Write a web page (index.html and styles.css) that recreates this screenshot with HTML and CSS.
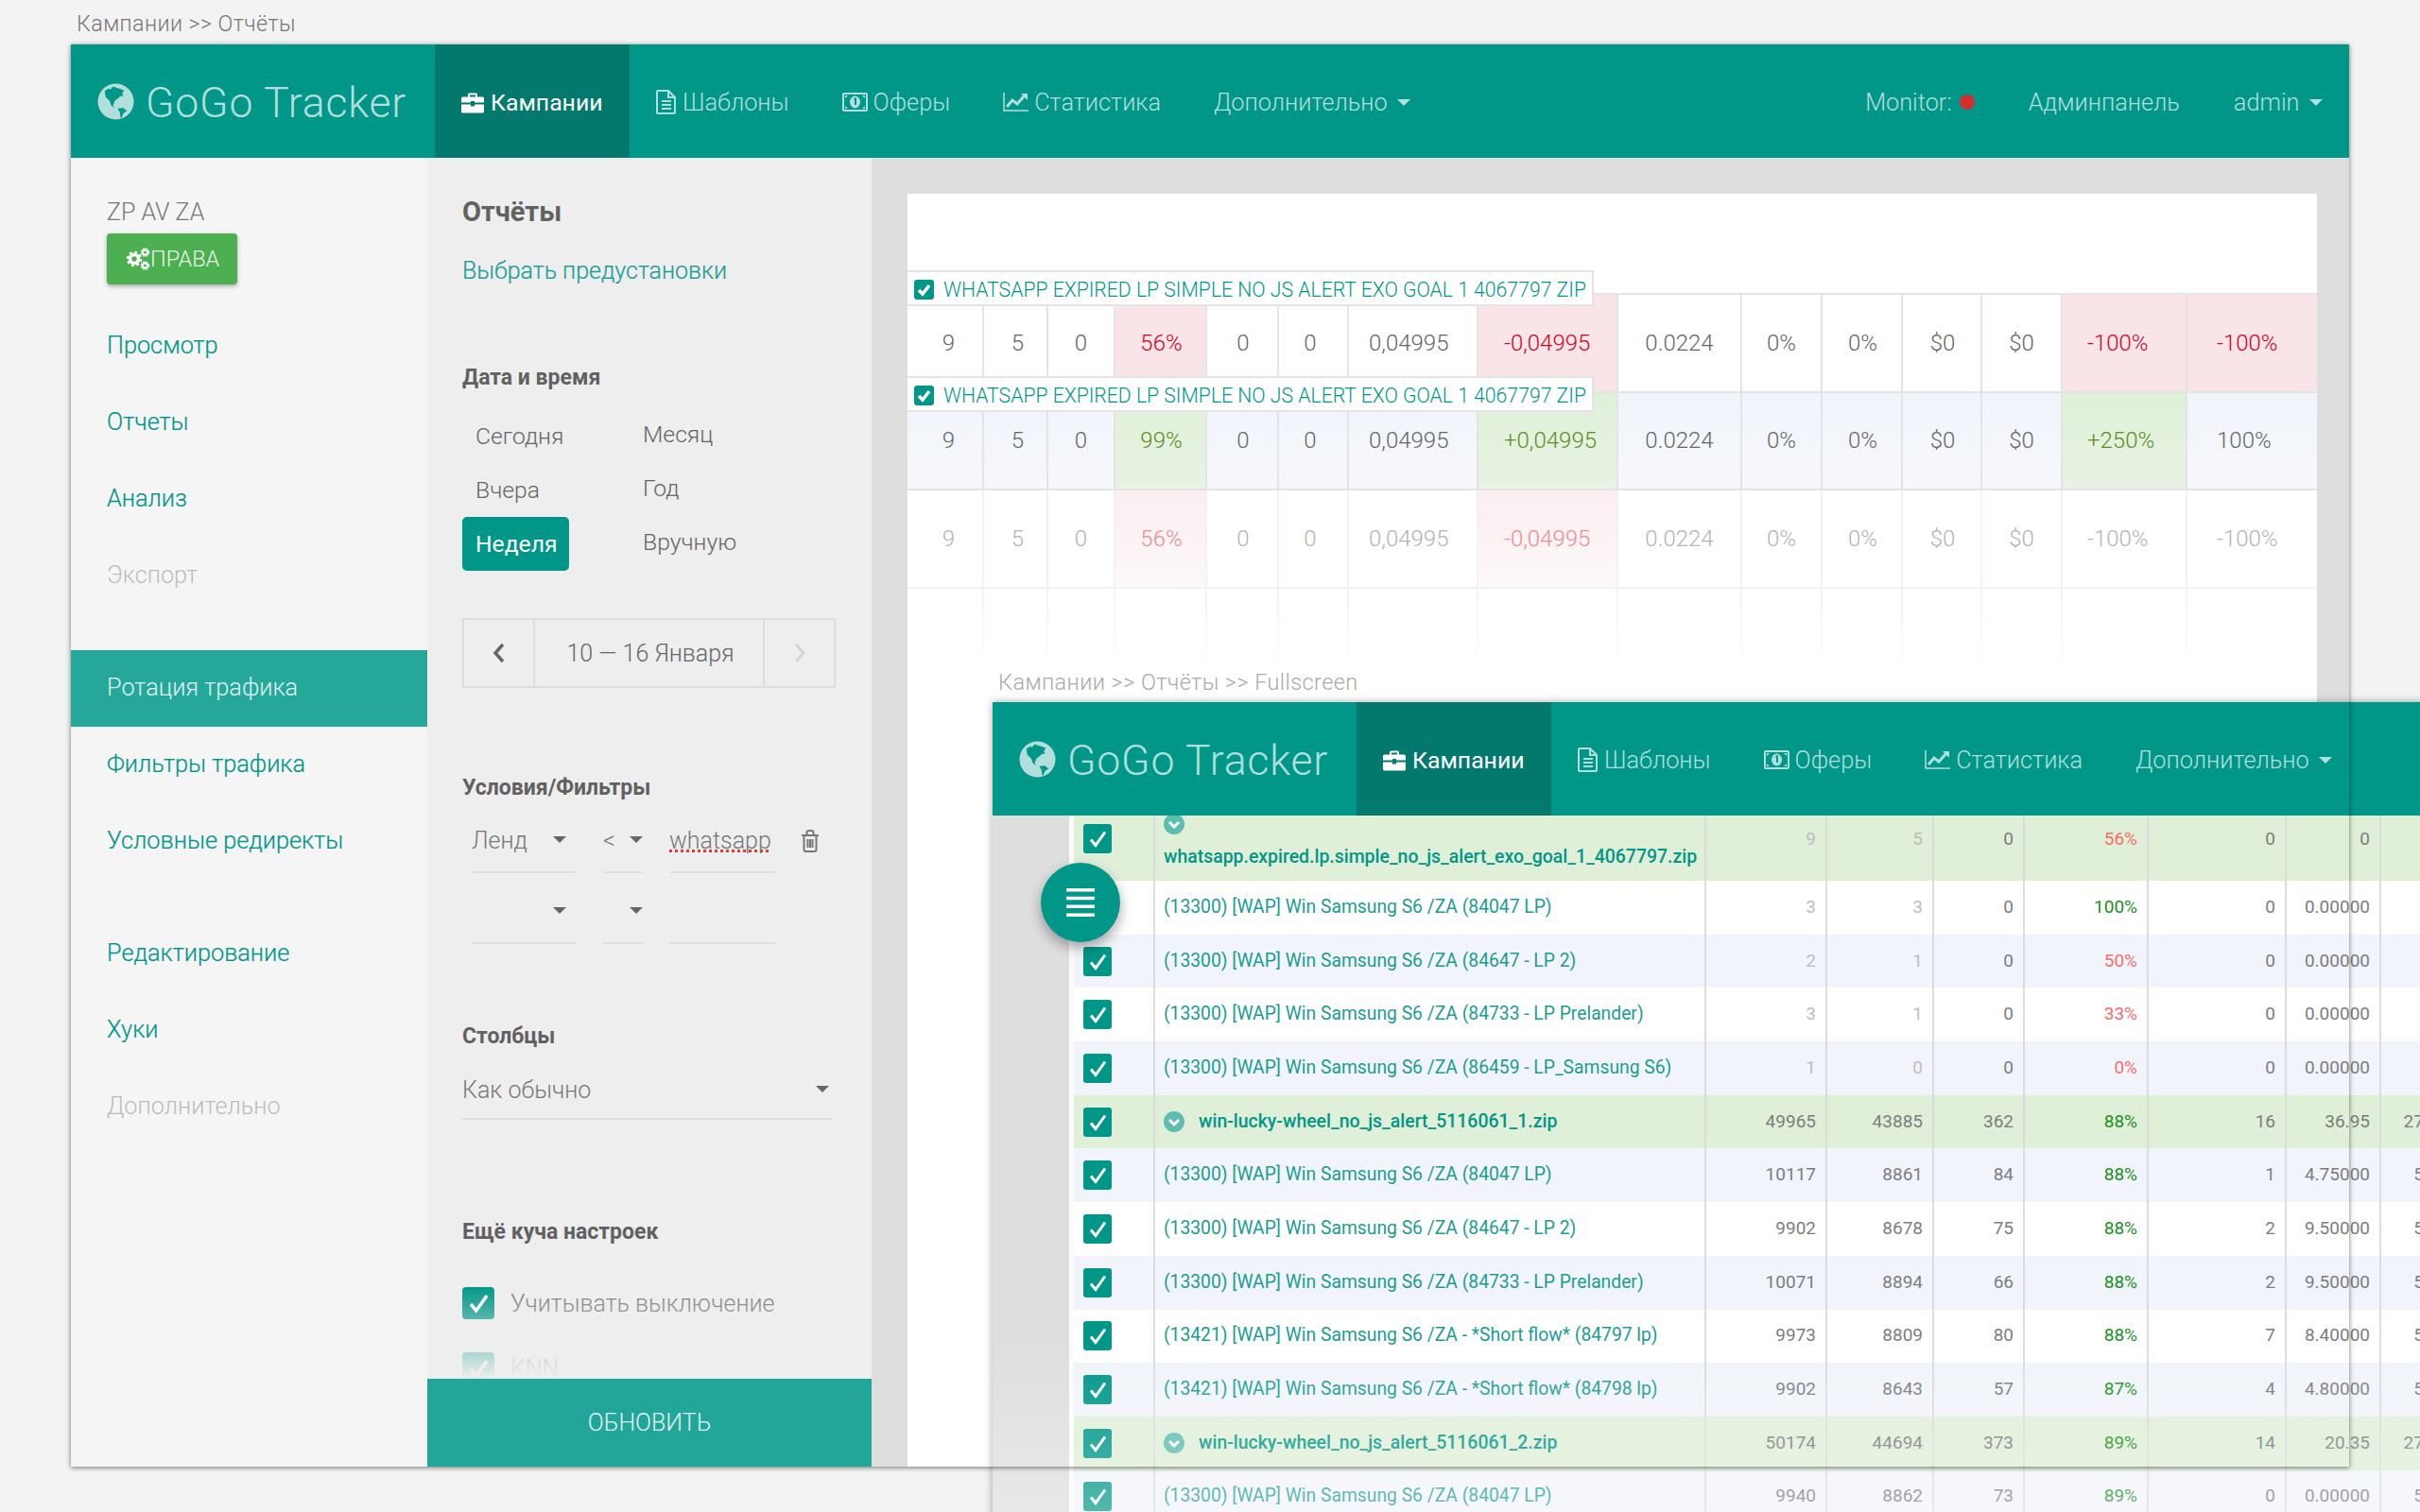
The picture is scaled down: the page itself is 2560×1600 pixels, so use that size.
FILE: index.html
```html
<!DOCTYPE html>
<html lang="ru">
<head>
    <meta charset="UTF-8">
    <title>GoGo Tracker - Отчёты</title>
    <link rel="stylesheet" href="styles.css">
</head>
<body>
    <svg class="defs" width="0" height="0">
        <symbol id="i-globe" viewBox="0 0 40 40">
            <circle cx="20" cy="20" r="19.5" fill="#b2dfdb"/>
            <path fill="#009688" d="M8 8.500L12 6l2 1 3-3.500L21 5l3 1 5 2-2 3 1 3-3 0-3 3-3 2-2 5 2 3-4-3-2-5-4-4z"/>
            <path fill="#009688" d="M22 27.500l6-.5 4 3-4 3-2 5-1-1-.500-5z"/>
        </symbol>
        <symbol id="i-case" viewBox="0 0 24 22">
            <path fill-rule="evenodd" d="M8.500 1h7A1.500 1.500 0 0 1 17 2.500V5h5.500A1.500 1.500 0 0 1 24 6.500V11H14V9.500h-4V11H0V6.500A1.500 1.500 0 0 1 1.500 5H7V2.500A1.500 1.500 0 0 1 8.500 1zM9 3v2h6V3zM0 13h10v2h4v-2h10v7.500a1.500 1.500 0 0 1-1.500 1.500h-21A1.500 1.500 0 0 1 0 20.500z"/>
        </symbol>
        <symbol id="i-file" viewBox="0 0 22 26">
            <path fill="none" stroke="currentColor" stroke-width="2" d="M2 1h11l7 7v16a1 1 0 0 1-1 1H2a1 1 0 0 1-1-1V2a1 1 0 0 1 1-1zM13 1v7h7M6 12h10M6 16h10M6 20h10"/>
        </symbol>
        <symbol id="i-money" viewBox="0 0 27 20">
            <rect x="1" y="1" width="25" height="18" rx="1" fill="none" stroke="currentColor" stroke-width="2"/>
            <ellipse cx="13.500" cy="10" rx="5.500" ry="6.500" fill="currentColor"/>
            <path fill="none" stroke="#009688" stroke-width="2" d="M12.500 7l1.500-.500V13"/>
            <path fill="currentColor" d="M3 3h3l-3 3zM24 3h-3l3 3zM3 17h3l-3-3zM24 17h-3l3-3z"/>
        </symbol>
        <symbol id="i-chart" viewBox="0 0 27 20">
            <path fill="none" stroke="currentColor" stroke-width="1.500" d="M1 0v19h26"/>
            <path fill="none" stroke="currentColor" stroke-width="3" d="M4 15l6-7 5 4 8-9"/>
            <path fill="currentColor" d="M19 1h7v7z"/>
        </symbol>
        <symbol id="i-cogs" viewBox="0 0 26 24">
            <g fill="none" stroke="#fff">
                <circle cx="9" cy="12" r="4.500" stroke-width="3.500"/>
                <circle cx="9" cy="12" r="7" stroke-width="2.500" stroke-dasharray="3 2.500"/>
                <circle cx="20.500" cy="5" r="2.500" stroke-width="2"/>
                <circle cx="20.500" cy="5" r="4" stroke-width="1.500" stroke-dasharray="2 1.200"/>
                <circle cx="20.500" cy="19" r="2.500" stroke-width="2"/>
                <circle cx="20.500" cy="19" r="4" stroke-width="1.500" stroke-dasharray="2 1.200"/>
            </g>
        </symbol>
        <symbol id="i-check" viewBox="0 0 30 30">
            <path fill="none" stroke="#fff" stroke-width="3" d="M8 16l5 6 10-14"/>
        </symbol>
        <symbol id="i-check-bold" viewBox="0 0 21 21">
            <path fill="none" stroke="#fff" stroke-width="3.500" d="M5 11l4 4 7-9"/>
        </symbol>
        <symbol id="i-down" viewBox="0 0 22 22">
            <circle cx="11" cy="11" r="11" fill="#5dbdb1"/>
            <path fill="none" stroke="#fff" stroke-width="3" d="M6 9l5 5 5-5"/>
        </symbol>
        <symbol id="i-trash" viewBox="0 0 20 24">
            <path fill="none" stroke="currentColor" stroke-width="2" d="M1 6h18M3.500 6v15a2 2 0 0 0 2 2h9a2 2 0 0 0 2-2V6M6.500 6V3a2 2 0 0 1 2-2h3a2 2 0 0 1 2 2v3M7.500 10v9M10 10v9M12.500 10v9"/>
        </symbol>
        <symbol id="i-menu" viewBox="0 0 30 30">
            <path fill="#fff" d="M0 0h30v3.500H0zM0 8.800h30v3.500H0zM0 17.600h30v3.500H0zM0 26.400h30v3.500H0z"/>
        </symbol>
    </svg>

    <!-- report window -->
    <section class="shot shot-report">
        <div class="crumbs">Кампании &gt;&gt; Отчёты</div>
        <div class="window">
            <header class="topbar">
                <div class="brand"><svg class="globe"><use href="#i-globe"/></svg><span class="brand-name">GoGo Tracker</span></div>
                <a class="nav-item active"><svg class="icon case"><use href="#i-case"/></svg>Кампании</a>
                <a class="nav-item"><svg class="icon file"><use href="#i-file"/></svg>Шаблоны</a>
                <a class="nav-item"><svg class="icon money"><use href="#i-money"/></svg>Оферы</a>
                <a class="nav-item"><svg class="icon money"><use href="#i-chart"/></svg>Статистика</a>
                <a class="nav-item">Дополнительно<span class="caret light"></span></a>
                <div class="topbar-right">
                    <a class="nav-item">Monitor:<span class="dot"></span></a>
                    <a class="nav-item">Админпанель</a>
                    <a class="nav-item">admin<span class="caret light"></span></a>
                </div>
            </header>
            <div class="window-body">
                <aside class="sidebar">
                    <div class="camp-name">ZP AV ZA</div>
                    <button class="rights-btn"><svg class="cogs"><use href="#i-cogs"/></svg>ПРАВА</button>
                    <ul class="side-menu">
                        <li>Просмотр</li>
                        <li>Отчеты</li>
                        <li>Анализ</li>
                        <li class="off">Экспорт</li>
                    </ul>
                    <ul class="side-menu">
                        <li class="current">Ротация трафика</li>
                        <li>Фильтры трафика</li>
                        <li>Условные редиректы</li>
                    </ul>
                    <ul class="side-menu">
                        <li>Редактирование</li>
                        <li>Хуки</li>
                        <li class="off">Дополнительно</li>
                    </ul>
                </aside>

                <div class="options">
                    <h2>Отчёты</h2>
                    <a class="preset-link">Выбрать предустановки</a>

                    <h3 class="date-title">Дата и время</h3>
                    <div class="periods">
                        <span class="period">Сегодня</span><span class="period up">Месяц</span>
                        <span class="period">Вчера</span><span class="period up">Год</span>
                        <span class="period selected">Неделя</span><span class="period up">Вручную</span>
                    </div>
                    <div class="date-nav">
                        <span class="date-arrow"><svg width="14" height="22"><path d="M11 2L3 11l8 9" fill="none" stroke="#666" stroke-width="3.500"/></svg></span>
                        <span class="date-range">10 — 16 Января</span>
                        <span class="date-arrow"><svg width="14" height="22"><path d="M3 2l8 9-8 9" fill="none" stroke="#d5d5d5" stroke-width="3"/></svg></span>
                    </div>

                    <h3 class="filter-title">Условия/Фильтры</h3>
                    <div class="filter-row">
                        <div class="field f-name">Ленд<span class="caret"></span></div>
                        <div class="field f-op">&lt;<span class="caret"></span></div>
                        <div class="field f-val"><span class="typo">whatsapp</span></div>
                        <svg class="trash"><use href="#i-trash"/></svg>
                    </div>
                    <div class="filter-row">
                        <div class="field f-name"><span class="caret"></span></div>
                        <div class="field f-op"><span class="caret"></span></div>
                        <div class="field f-val"></div>
                    </div>

                    <h3 class="columns-title">Столбцы</h3>
                    <div class="field f-columns">Как обычно<span class="caret"></span></div>

                    <h3 class="more-title">Ещё куча настроек</h3>
                    <label class="opt"><span class="box"><svg><use href="#i-check"/></svg></span>Учитывать выключение</label>
                    <label class="opt"><span class="box"><svg><use href="#i-check"/></svg></span>KNN</label>
                    <div class="options-fade"></div>
                    <button class="update-btn">ОБНОВИТЬ</button>
                </div>

                <div class="content">
                    <div class="sheet">
                        <div class="chip chip-one"><span class="mini-box"><svg><use href="#i-check-bold"/></svg></span>WHATSAPP EXPIRED LP SIMPLE NO JS ALERT EXO GOAL 1 4067797 ZIP</div>
                        <div class="chip chip-two"><span class="mini-box"><svg><use href="#i-check-bold"/></svg></span>WHATSAPP EXPIRED LP SIMPLE NO JS ALERT EXO GOAL 1 4067797 ZIP</div>
                        <table class="report">
                            <tr>
                                <td>9</td><td>5</td><td>0</td><td class="bad">56%</td><td>0</td><td>0</td><td>0,04995</td><td class="bad">-0,04995</td><td>0.0224</td><td>0%</td><td>0%</td><td>$0</td><td>$0</td><td class="bad">-100%</td><td class="bad">-100%</td>
                            </tr>
                            <tr class="alt">
                                <td>9</td><td>5</td><td>0</td><td class="good">99%</td><td>0</td><td>0</td><td>0,04995</td><td class="good">+0,04995</td><td>0.0224</td><td>0%</td><td>0%</td><td>$0</td><td>$0</td><td class="good">+250%</td><td>100%</td>
                            </tr>
                            <tr class="dim">
                                <td>9</td><td>5</td><td>0</td><td class="bad">56%</td><td>0</td><td>0</td><td>0,04995</td><td class="bad">-0,04995</td><td>0.0224</td><td>0%</td><td>0%</td><td>$0</td><td>$0</td><td>-100%</td><td>-100%</td>
                            </tr>
                            <tr class="dim empty">
                                <td></td><td></td><td></td><td></td><td></td><td></td><td></td><td></td><td></td><td></td><td></td><td></td><td></td><td></td><td></td>
                            </tr>
                        </table>
                        <div class="report-fade"></div>
                    </div>
                </div>
            </div>
        </div>
    </section>

    <!-- fullscreen window, lies over the report -->
    <section class="shot shot-full">
        <div class="crumbs">Кампании &gt;&gt; Отчёты &gt;&gt; Fullscreen</div>
        <div class="window">
            <header class="topbar">
                <div class="brand"><svg class="globe"><use href="#i-globe"/></svg><span class="brand-name">GoGo Tracker</span></div>
                <a class="nav-item active"><svg class="icon case"><use href="#i-case"/></svg>Кампании</a>
                <a class="nav-item"><svg class="icon file"><use href="#i-file"/></svg>Шаблоны</a>
                <a class="nav-item"><svg class="icon money"><use href="#i-money"/></svg>Оферы</a>
                <a class="nav-item"><svg class="icon money"><use href="#i-chart"/></svg>Статистика</a>
                <a class="nav-item">Дополнительно<span class="caret light"></span></a>
            </header>
            <div class="full-body">
                <table class="flows">
                    <tr class="group first">
                        <td><span class="flow-box"><svg><use href="#i-check"/></svg></span></td>
                        <td class="name"><svg class="down solo"><use href="#i-down"/></svg>whatsapp.expired.lp.simple_no_js_alert_exo_goal_1_4067797.zip</td>
                        <td class="pale">9</td><td class="pale">5</td><td>0</td><td class="minus">56%</td><td>0</td><td>0</td><td></td>
                    </tr>
                    <tr>
                        <td><span class="flow-box"><svg><use href="#i-check"/></svg></span></td>
                        <td class="name">(13300) [WAP] Win Samsung S6 /ZA (84047 LP)</td>
                        <td class="pale">3</td><td class="pale">3</td><td>0</td><td class="plus">100%</td><td>0</td><td>0.00000</td><td></td>
                    </tr>
                    <tr class="alt">
                        <td><span class="flow-box"><svg><use href="#i-check"/></svg></span></td>
                        <td class="name">(13300) [WAP] Win Samsung S6 /ZA (84647 - LP 2)</td>
                        <td class="pale">2</td><td class="pale">1</td><td>0</td><td class="minus">50%</td><td>0</td><td>0.00000</td><td></td>
                    </tr>
                    <tr>
                        <td><span class="flow-box"><svg><use href="#i-check"/></svg></span></td>
                        <td class="name">(13300) [WAP] Win Samsung S6 /ZA (84733 - LP Prelander)</td>
                        <td class="pale">3</td><td class="pale">1</td><td>0</td><td class="minus">33%</td><td>0</td><td>0.00000</td><td></td>
                    </tr>
                    <tr class="alt">
                        <td><span class="flow-box"><svg><use href="#i-check"/></svg></span></td>
                        <td class="name">(13300) [WAP] Win Samsung S6 /ZA (86459 - LP_Samsung S6)</td>
                        <td class="pale">1</td><td class="pale">0</td><td>0</td><td class="minus">0%</td><td>0</td><td>0.00000</td><td></td>
                    </tr>
                    <tr class="group">
                        <td><span class="flow-box"><svg><use href="#i-check"/></svg></span></td>
                        <td class="name"><svg class="down"><use href="#i-down"/></svg>win-lucky-wheel_no_js_alert_5116061_1.zip</td>
                        <td>49965</td><td>43885</td><td>362</td><td class="plus">88%</td><td>16</td><td>36.95</td><td>27480</td>
                    </tr>
                    <tr class="alt">
                        <td><span class="flow-box"><svg><use href="#i-check"/></svg></span></td>
                        <td class="name">(13300) [WAP] Win Samsung S6 /ZA (84047 LP)</td>
                        <td>10117</td><td>8861</td><td>84</td><td class="plus">88%</td><td>1</td><td>4.75000</td><td>5480</td>
                    </tr>
                    <tr>
                        <td><span class="flow-box"><svg><use href="#i-check"/></svg></span></td>
                        <td class="name">(13300) [WAP] Win Samsung S6 /ZA (84647 - LP 2)</td>
                        <td>9902</td><td>8678</td><td>75</td><td class="plus">88%</td><td>2</td><td>9.50000</td><td>5480</td>
                    </tr>
                    <tr class="alt">
                        <td><span class="flow-box"><svg><use href="#i-check"/></svg></span></td>
                        <td class="name">(13300) [WAP] Win Samsung S6 /ZA (84733 - LP Prelander)</td>
                        <td>10071</td><td>8894</td><td>66</td><td class="plus">88%</td><td>2</td><td>9.50000</td><td>5480</td>
                    </tr>
                    <tr>
                        <td><span class="flow-box"><svg><use href="#i-check"/></svg></span></td>
                        <td class="name">(13421) [WAP] Win Samsung S6 /ZA - *Short flow* (84797 lp)</td>
                        <td>9973</td><td>8809</td><td>80</td><td class="plus">88%</td><td>7</td><td>8.40000</td><td>5480</td>
                    </tr>
                    <tr class="alt">
                        <td><span class="flow-box"><svg><use href="#i-check"/></svg></span></td>
                        <td class="name">(13421) [WAP] Win Samsung S6 /ZA - *Short flow* (84798 lp)</td>
                        <td>9902</td><td>8643</td><td>57</td><td class="plus">87%</td><td>4</td><td>4.80000</td><td>5480</td>
                    </tr>
                    <tr class="group">
                        <td><span class="flow-box"><svg><use href="#i-check"/></svg></span></td>
                        <td class="name"><svg class="down"><use href="#i-down"/></svg>win-lucky-wheel_no_js_alert_5116061_2.zip</td>
                        <td>50174</td><td>44694</td><td>373</td><td class="plus">89%</td><td>14</td><td>20.35</td><td>27480</td>
                    </tr>
                    <tr class="alt">
                        <td><span class="flow-box"><svg><use href="#i-check"/></svg></span></td>
                        <td class="name">(13300) [WAP] Win Samsung S6 /ZA (84047 LP)</td>
                        <td>9940</td><td>8862</td><td>73</td><td class="plus">89%</td><td>0</td><td>0.00000</td><td>5480</td>
                    </tr>
                </table>
                <button class="fab"><svg><use href="#i-menu"/></svg></button>
                <div class="full-fade"></div>
            </div>
        </div>
    </section>

    <!-- edge of the report window, its shadow falls on the fullscreen one -->
    <div class="report-edge"></div>
</body>
</html>
```

FILE: styles.css
```css
* {
    box-sizing: border-box;
}
html, body {
    margin: 0;
    padding: 0;
}
body {
    position: relative;
    width: 2560px;
    height: 1600px;
    overflow: hidden;
    background-color: #f3f3f3;
    color: #666;
    font-family: Roboto, "Liberation Sans", sans-serif;
    font-size: 25px;
}
ul {
    list-style: none;
    margin: 0;
    padding: 0;
}
h2, h3 {
    margin: 0;
    color: #616161;
    font-weight: 700;
}
svg {
    display: block;
}
.defs {
    position: absolute;
}

/* windows */
.shot {
    position: absolute;
}
.shot-report {
    left: 75px;
    top: 0;
    width: 2410px;
}
.shot-full {
    left: 1050px;
    top: 700px;
    width: 2410px;
}
.crumbs {
    display: flex;
    align-items: center;
    height: 47px;
    padding: 2px 0 0 6px;
    color: #777;
    font-size: 23.300px;
    font-weight: 300;
    letter-spacing: 0.4px;
}
.shot-full .crumbs {
    height: 43px;
    padding-top: 0;
    color: #a9a9a9;
    font-size: 23.500px;
}
.window {
    height: 1505px;
    background-color: #f5f5f5;
}
.shot-full .window {
    height: 900px;
    background-color: #dedede;
    box-shadow: 0 0 8px rgba(0,0,0,0.35);
}
.report-edge {
    position: absolute;
    left: 75px;
    top: 47px;
    width: 2410px;
    height: 1505px;
    box-shadow: 0 1px 5px rgba(0,0,0,0.55);
    pointer-events: none;
}

/* top bar */
.topbar {
    display: flex;
    height: 120px;
    background-color: #009688;
}
.brand {
    display: flex;
    align-items: center;
    width: 385px;
    padding-left: 28px;
    color: #b2dfdb;
    font-size: 44.600px;
    font-weight: 300;
    letter-spacing: 0.8px;
}
.brand-name {
    padding-top: 3px;
    margin-left: -1px;
}
.globe {
    width: 39px;
    height: 39px;
    margin-right: 13px;
}
.nav-item {
    display: flex;
    align-items: center;
    padding: 2px 28px 0;
    color: #b2dfdb;
    font-size: 25.300px;
    font-weight: 300;
}
.nav-item.active {
    width: 206px;
    background-color: #03786c;
    color: #fff;
    font-size: 24.800px;
    font-weight: 400;
}
.icon {
    margin-right: 6px;
    fill: currentColor;
}
.active .icon {
    margin-right: 7px;
}
.case {
    width: 24px;
    height: 23px;
}
.file {
    width: 22px;
    height: 26px;
}
.money {
    width: 27px;
    height: 20px;
}
.topbar-right {
    display: flex;
    margin-left: auto;
}
.topbar-right .nav-item {
    padding: 2px 28.5px 0;
}
.dot {
    width: 16px;
    height: 16px;
    margin-left: 8px;
    border-radius: 50%;
    background-color: #d32f2f;
}
.caret {
    display: inline-block;
    width: 0;
    height: 0;
    margin-left: auto;
    border-top: 7px solid #666;
    border-left: 7.500px solid transparent;
    border-right: 7.500px solid transparent;
}
.caret.light {
    margin-left: 10px;
    border-top-color: #b2dfdb;
}

/* report window body */
.window-body {
    display: flex;
    height: 1385px;
}
.sidebar {
    width: 377px;
    padding-top: 44px;
    background-color: #f5f5f5;
}
.camp-name {
    padding-left: 38px;
    color: #777;
    font-size: 25px;
    font-weight: 300;
    line-height: 28px;
}
.rights-btn {
    display: flex;
    align-items: center;
    width: 138px;
    height: 54px;
    margin: 8px 0 25px 38px;
    padding: 0 0 0 20px;
    border: none;
    border-radius: 4px;
    background-color: #4caf50;
    box-shadow: 0 2px 4px rgba(0,0,0,0.3);
    color: #e8f5e9;
    font-family: inherit;
    font-size: 23.500px;
    font-weight: 300;
}
.cogs {
    width: 26px;
    height: 24px;
}
.side-menu {
    margin-bottom: 38px;
}
.side-menu li {
    height: 81px;
    padding-left: 38px;
    color: #009688;
    font-size: 25.300px;
    font-weight: 300;
    -webkit-text-stroke: 0.2px #009688;
    line-height: 80px;
}
.side-menu li.off {
    color: #bdbdbd;
    -webkit-text-stroke: 0;
}
.side-menu li.current {
    background-color: #25a899;
    color: #e0f2f1;
    -webkit-text-stroke: 0;
}

/* report options */
.options {
    position: relative;
    width: 470px;
    height: 1385px;
    padding: 40px 0 0 37px;
    overflow: hidden;
    background-color: #eee;
}
.options h2 {
    font-size: 29px;
    line-height: 34px;
}
.options h3 {
    font-size: 23px;
    line-height: 26px;
}
.preset-link {
    display: block;
    margin-top: 31px;
    color: #1a9f91;
    font-size: 25px;
    font-weight: 300;
    -webkit-text-stroke: 0.2px #1a9f91;
    line-height: 30px;
}
.date-title {
    margin-top: 85px;
}
.periods {
    display: grid;
    grid-template-columns: 177px 200px;
    grid-auto-rows: 57px;
    margin-top: 20px;
    color: #666;
    font-size: 24.700px;
}
.period {
    display: flex;
    align-items: center;
    padding-left: 14px;
    font-weight: 300;
}
.period.up {
    padding-bottom: 4px;
}
.period.selected {
    width: 113px;
    border-radius: 5px;
    background-color: #009688;
    color: #fff;
    font-weight: 400;
}
.date-nav {
    display: flex;
    width: 395px;
    height: 74px;
    margin-top: 50px;
    border: 2px solid #ddd;
}
.date-arrow {
    display: flex;
    flex: 0 0 73px;
    align-items: center;
    justify-content: center;
}
.date-range {
    display: flex;
    flex: 1;
    align-items: center;
    justify-content: center;
    padding-left: 3px;
    border-left: 2px solid #ddd;
    border-right: 2px solid #ddd;
    font-size: 25px;
    font-weight: 300;
}
.filter-title {
    margin-top: 93px;
    margin-bottom: 2px;
}
.filter-row {
    display: flex;
    align-items: flex-start;
    height: 75px;
    padding-left: 10px;
}
.field {
    display: flex;
    align-items: center;
    height: 75px;
    padding-top: 26px;
    padding-bottom: 19px;
    border-bottom: 2px solid #e0e0e0;
    color: #777;
    font-size: 25px;
    font-weight: 300;
}
.field .caret {
    margin-bottom: 2px;
}
.f-name {
    width: 111px;
    padding-right: 11px;
}
.f-op {
    width: 42px;
    margin-left: 28px;
    padding-right: 0;
}
.f-val {
    width: 112px;
    margin-left: 28px;
}
.typo {
    text-decoration: underline dotted #e53935 3px;
    text-underline-offset: 1px;
    text-decoration-skip-ink: none;
}
.trash {
    width: 20px;
    height: 24px;
    margin: 29px 0 0 27px;
    color: #777;
}
.columns-title {
    margin-top: 85px;
}
.f-columns {
    width: 391px;
    height: 62px;
    margin-top: 13px;
    padding: 15px 3px 15px 0;
}
.more-title {
    margin-top: 106px;
}
.opt {
    display: flex;
    align-items: center;
    height: 34px;
    margin-top: 45px;
    color: #777;
    font-size: 25px;
    font-weight: 300;
}
.opt + .opt {
    margin-top: 35px;
}
.box {
    flex: 0 0 34px;
    height: 34px;
    margin-right: 17px;
    border-radius: 4px;
    background-color: #009688;
}
.box svg {
    width: 34px;
    height: 34px;
}
.options-fade {
    position: absolute;
    left: 0;
    right: 0;
    bottom: 93px;
    height: 99px;
    background: linear-gradient(rgba(238,238,238,0), #eee);
}
.update-btn {
    position: absolute;
    left: 0;
    bottom: 0;
    width: 470px;
    height: 93px;
    border: none;
    background-color: #22a699;
    color: #e0f2f1;
    font-family: inherit;
    font-size: 25px;
    font-weight: 300;
}

/* report table */
.content {
    flex: 1;
    padding: 38px 34px 0 38px;
    background-color: #dedede;
}
.sheet {
    position: relative;
    height: 100%;
    padding-top: 105px;
    background-color: #fff;
}
.chip {
    position: absolute;
    left: 0;
    display: flex;
    align-items: center;
    width: 726px;
    height: 38px;
    padding: 2px 0 0 7px;
    border: 2px solid #e4e4e4;
    border-left: none;
    background-color: #fff;
    color: #009688;
    font-size: 21.200px;
    font-weight: 300;
    z-index: 2;
}
.chip-one {
    top: 81px;
}
.chip-two {
    top: 193px;
}
.mini-box {
    flex: 0 0 21px;
    height: 21px;
    margin-right: 10px;
    border-radius: 3px;
    background-color: #009688;
}
.mini-box svg {
    width: 21px;
    height: 21px;
}
.report {
    width: 1491px;
    table-layout: fixed;
    border-collapse: collapse;
    color: #666;
    font-size: 24px;
    font-weight: 300;
}
.report td {
    height: 103.500px;
    padding: 0;
    border: 2px solid #e4e4e4;
    text-align: center;
}
.report td:first-child {
    width: 80px;
    padding-left: 8px;
    border-left: none;
}
.report td:nth-child(2) { width: 68px; padding-left: 5px; }
.report td:nth-child(3) { width: 71px; }
.report td:nth-child(4) { width: 97px; padding-left: 2px; }
.report td:nth-child(5) { width: 76px; padding-left: 2px; }
.report td:nth-child(6) { width: 74px; padding-right: 6px; }
.report td:nth-child(7) { width: 137px; text-align: left; padding-left: 21px; }
.report td:nth-child(8) { width: 148px; text-align: left; padding-left: 27px; }
.report td:nth-child(9) { width: 131px; }
.report td:nth-child(10) { width: 85px; }
.report td:nth-child(11) { width: 85px; padding-left: 2px; }
.report td:nth-child(12) { width: 84px; padding-left: 2px; }
.report td:nth-child(13) { width: 85px; }
.report td:nth-child(14) { width: 132px; text-align: left; padding-left: 26px; }
.report td:nth-child(15) { width: 138px; text-align: left; padding-left: 31px; border-right: none; }
.report .bad {
    background-color: #f9e5e7;
    color: #d0021b;
}
.report .alt td {
    background: linear-gradient(#f1f4fa, #f6f8fd);
}
.report .alt td.good {
    background: linear-gradient(#dff0d8, #e8f3e3);
    color: #5b8f22;
}
.report .dim td {
    border-color: #f2f2f2;
    color: #b3b3b3;
}
.report .dim td.bad {
    background: linear-gradient(#fbeef0, #fdf8f9);
    color: #ec8a96;
}
.report .empty td {
    height: 90px;
    border-bottom: none;
}
.report-fade {
    position: absolute;
    left: 0;
    right: 0;
    top: 417px;
    height: 90px;
    background: linear-gradient(rgba(255,255,255,0), #fff);
}

/* fullscreen window body */
.full-body {
    position: relative;
    height: 780px;
    padding-left: 86px;
    overflow: hidden;
}
.flows {
    width: 1470px;
    table-layout: fixed;
    border-collapse: collapse;
    box-shadow: -5px 0 0 #fbfbfb;
    background-color: #fff;
    color: #7d7d7d;
    font-size: 19px;
}
.flows td {
    height: 56.700px;
    padding: 0 10px 2px 0;
    border-right: 2px solid #dcdcdc;
    text-align: right;
}
.flows td:nth-child(1) { width: 85px; padding: 0 0 0 10px; text-align: left; }
.flows td:nth-child(2) { width: 583px; }
.flows td:nth-child(3) { width: 128px; }
.flows td:nth-child(4) { width: 113px; }
.flows td:nth-child(5) { width: 96px; }
.flows td:nth-child(6) { width: 131px; }
.flows td:nth-child(7) { width: 146px; }
.flows td:nth-child(8) { width: 100px; }
.flows td:nth-child(9) { width: 88px; border-right: none; }
.flows .name {
    padding: 0 0 2px 9px;
    color: #1b9d90;
    font-size: 19.300px;
    text-align: left;
    white-space: nowrap;
}
.flows .alt td {
    background-color: #f1f4fa;
}
.flows .group td {
    background-color: #dfefd8;
}
.flows .group .name {
    color: #009688;
    font-size: 19.450px;
    font-weight: 500;
}
.flows .first td {
    height: 69px;
    vertical-align: top;
    padding-top: 13px;
}
.flows .first td:nth-child(1) {
    padding-top: 9px;
}
.flows .first .name {
    padding-top: 32px;
}
.flows .pale {
    color: #bdbdbd;
}
.flows .plus {
    color: #1c8f1c;
}
.flows .minus {
    color: #f76d6d;
}
.flow-box {
    display: block;
    width: 30px;
    height: 31px;
    border-radius: 3px;
    background-color: #009688;
}
.flow-box svg {
    width: 30px;
    height: 31px;
}
.down {
    display: inline-block;
    width: 22px;
    height: 22px;
    margin-right: 15px;
    vertical-align: -5px;
}
.down.solo {
    position: absolute;
    top: -2px;
    left: 181px;
}
.fab {
    position: absolute;
    left: 51px;
    top: 50px;
    display: flex;
    align-items: center;
    justify-content: center;
    width: 84px;
    height: 84px;
    padding: 0;
    border: none;
    border-radius: 50%;
    background-color: #009688;
    box-shadow: 0 6px 14px rgba(0,0,0,0.35);
}
.fab svg {
    width: 30px;
    height: 30px;
}
.full-fade {
    position: absolute;
    left: 0;
    right: 0;
    top: 557px;
    height: 180px;
    background: linear-gradient(rgba(255,255,255,0), rgba(255,255,255,0.32));
}
```
